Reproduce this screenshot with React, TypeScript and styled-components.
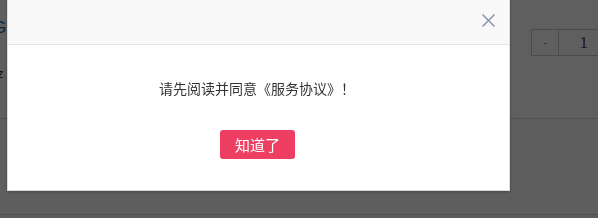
import React from "react";
import styled, { createGlobalStyle } from "styled-components";

const Global = createGlobalStyle`
  html, body { margin: 0; padding: 0; }
  body {
    width: 598px;
    height: 218px;
    overflow: hidden;
    background: #ffffff;
    font-family: "Noto Sans CJK SC", "Noto Sans", sans-serif;
  }
`;

const Page = styled.div`
  width: 598px;
  height: 218px;
  display: flex;
  flex-direction: column;
  background: #fff;
`;

const TopSection = styled.div`
  height: 119px;
  border-bottom: 1px solid #d8d8d8;
  display: flex;
  justify-content: space-between;
  padding-top: 29px;
  box-sizing: border-box;
`;

const LeftCol = styled.div`
  display: flex;
  flex-direction: column;
  gap: 28px;
  margin-top: -11px;
`;

const LinkText = styled.span`
  font-family: "Liberation Sans", sans-serif;
  font-size: 17px;
  color: #1560a8;
  margin-left: -7px;
`;

const SmallDark = styled.span`
  font-family: "Liberation Sans", sans-serif;
  font-size: 13px;
  color: #333;
  margin-left: -3px;
`;

const Stepper = styled.div`
  display: flex;
  height: 27px;
  border: 1px solid #c9c9c9;
  border-right: none;
  box-sizing: border-box;
  width: 67px;
`;

const StepBtn = styled.div`
  width: 26px;
  border-right: 1px solid #c9c9c9;
  display: flex;
  align-items: center;
  justify-content: center;
  color: #999;
  font-family: "Liberation Sans", sans-serif;
  font-size: 12px;
`;

const StepValue = styled.div`
  flex: 1;
  display: flex;
  align-items: center;
  justify-content: flex-end;
  padding-right: 10px;
  font-family: "Liberation Serif", serif;
  font-size: 17px;
  color: #444;
`;

const MidSection = styled.div`
  height: 95px;
  border-bottom: 1px solid #d0d0d0;
  background: #fbfbfb;
`;

const BottomSection = styled.div`
  flex: 1;
  background: #f4f4f4;
`;

const Overlay = styled.div`
  position: fixed;
  inset: 0;
  background: rgba(0, 0, 0, 0.628);
`;

const Dialog = styled.div`
  position: fixed;
  left: 7px;
  top: 0;
  width: 503px;
  background: #fff;
  border: 1px solid #dcdcdc;
  border-top: none;
  box-sizing: border-box;
  box-shadow: 0 1px 3px rgba(0, 0, 0, 0.25);
  display: flex;
  flex-direction: column;
`;

const Header = styled.div`
  height: 45px;
  background: #f9f9f9;
  border-bottom: 1px solid #e3e3e3;
  box-sizing: border-box;
  display: flex;
  align-items: center;
  justify-content: flex-end;
  padding-right: 14px;
`;

const CloseBtn = styled.button`
  border: none;
  background: none;
  padding: 0;
  width: 14px;
  height: 14px;
  display: flex;
  align-items: center;
  justify-content: center;
  cursor: pointer;
  margin-top: -3px;
`;

const Body = styled.div`
  padding: 33px 0 31px;
  display: flex;
  flex-direction: column;
  align-items: center;
  gap: 32px;
`;

const Message = styled.p`
  margin: 0 0 0 -3px;
  font-size: 14px;
  line-height: 20px;
  color: #333;
`;

const OkButton = styled.button`
  height: 29px;
  width: 75px;
  margin-left: -2px;
  border: none;
  border-radius: 3px;
  background: #ee3f62;
  color: #fff;
  font-family: "Noto Sans CJK SC", sans-serif;
  font-size: 15px;
  line-height: 29px;
  padding: 0;
  cursor: pointer;
`;

export default function App() {
  return (
    <>
      <Global />
      <Page>
        <TopSection>
          <LeftCol>
            <LinkText>GE</LinkText>
            <SmallDark>z</SmallDark>
          </LeftCol>
          <Stepper>
            <StepBtn>-</StepBtn>
            <StepValue>1</StepValue>
          </Stepper>
        </TopSection>
        <MidSection />
        <BottomSection />
      </Page>
      <Overlay />
      <Dialog role="dialog">
        <Header>
          <CloseBtn aria-label="关闭">
            <svg width="13" height="13" viewBox="0 0 13 13">
              <path
                d="M1 1 L12 12 M12 1 L1 12"
                stroke="#8d9cb0"
                strokeWidth="1.7"
                strokeLinecap="round"
              />
            </svg>
          </CloseBtn>
        </Header>
        <Body>
          <Message>请先阅读并同意《服务协议》！</Message>
          <OkButton>知道了</OkButton>
        </Body>
      </Dialog>
    </>
  );
}
